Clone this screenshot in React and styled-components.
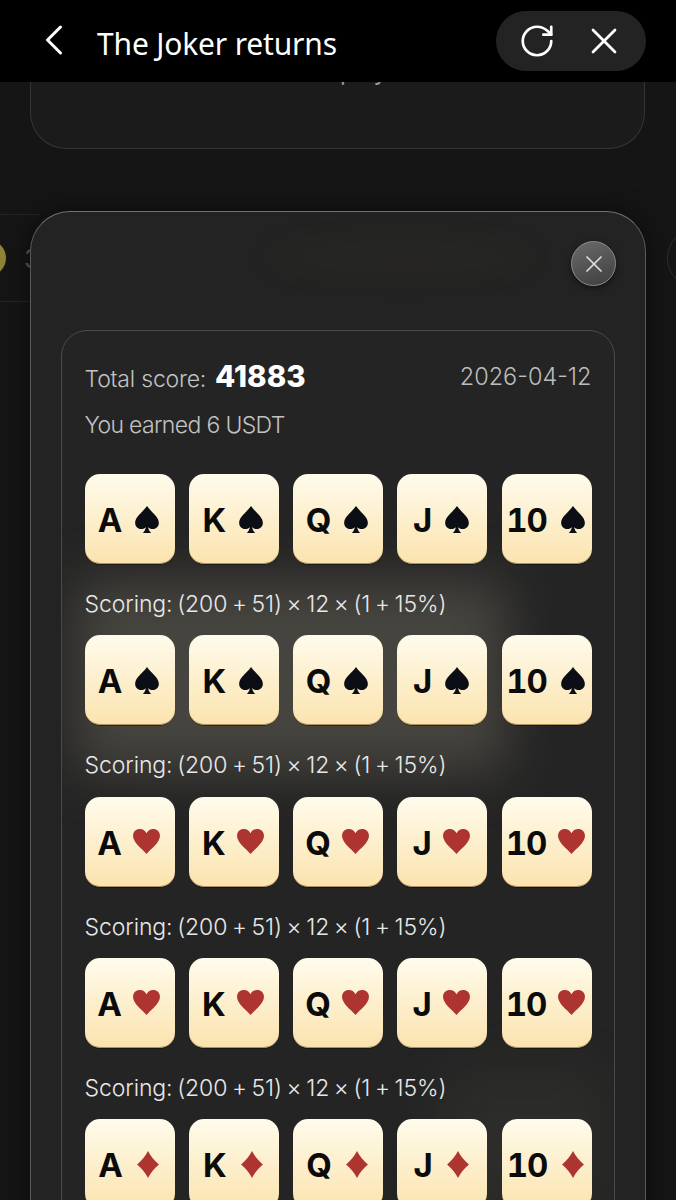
import React from "react"
import styled, { createGlobalStyle } from "styled-components"
import { ChevronLeft, RotateCw, X } from "lucide-react"

const GlobalStyle = createGlobalStyle`
  html, body {
    margin: 0;
    padding: 0;
    background: #141414;
  }
  * {
    box-sizing: border-box;
  }
`

const Page = styled.div`
  position: relative;
  width: 676px;
  height: 1200px;
  overflow: hidden;
  background: #151515;
  font-family: "Inter", "Liberation Sans", sans-serif;
`

const Header = styled.header`
  position: relative;
  z-index: 3;
  display: flex;
  align-items: center;
  height: 82px;
  padding: 0 30px 0 28px;
  background: #000;
  color: #fff;
`

const BackIcon = styled(ChevronLeft)`
  flex: none;
  width: 52px;
  height: 52px;
  margin-top: -3px;
`

const Title = styled.h1`
  flex: 1;
  margin: 4px 0 0 17px;
  font-family: "Noto Sans", sans-serif;
  font-size: 30px;
  font-weight: 400;
  letter-spacing: -0.17px;
  color: #fff;
`

const Pill = styled.div`
  display: flex;
  align-items: center;
  justify-content: center;
  gap: 26px;
  width: 150px;
  height: 60px;
  padding-left: 2px;
  border-radius: 30px;
  background: #232323;
  color: #fff;
`

const BackCard = styled.div`
  display: flow-root;
  height: 67px;
  margin: 0 31px 0 30px;
  border: 1px solid #363636;
  border-top: 0;
  border-radius: 0 0 36px 36px;
  background: #1b1b1b;
`

const BackCardText = styled.p`
  margin: -25px 0 0;
  padding-left: 52px;
  text-align: center;
  font-size: 24px;
  line-height: 30px;
  color: #9a9a9a;
`

const BackStrip = styled.div`
  display: flex;
  align-items: center;
  justify-content: space-between;
  height: 88px;
  margin-top: 65px;
`

const BackRow = styled.div`
  display: flex;
  align-items: center;
  gap: 18px;
  width: 40px;
  height: 100%;
  border-top: 1px solid #242424;
  border-bottom: 1px solid #242424;
`

const Coin = styled.span`
  flex: none;
  width: 36px;
  height: 36px;
  margin-left: -30px;
  border-radius: 50%;
  background: #8d8535;
`

const BackRank = styled.span`
  font-size: 26px;
  color: #5a5a5a;
`

const Ring = styled.span`
  flex: none;
  width: 60px;
  height: 60px;
  margin-right: -51px;
  border-radius: 50%;
  border: 1px solid #2e2e2e;
`

const Modal = styled.section`
  position: absolute;
  z-index: 2;
  top: 211px;
  left: 30px;
  width: 616px;
  height: 1100px;
  padding: 118px 30px 0;
  border: 1.5px solid #5a5a5a;
  border-top-color: #707070;
  border-radius: 40px;
  background: #232323;
  box-shadow: 0 0 24px rgba(0, 0, 0, 0.5);
`

const TopGlow = styled.div`
  position: absolute;
  top: 32px;
  left: 240px;
  width: 260px;
  height: 26px;
  border-radius: 50%;
  background: rgba(90, 75, 30, 0.1);
  filter: blur(14px);
`

const CloseButton = styled.button`
  position: absolute;
  top: 29px;
  right: 29px;
  display: flex;
  align-items: center;
  justify-content: center;
  width: 45px;
  height: 45px;
  padding: 0;
  border: 1px solid #8a8a8a;
  border-radius: 50%;
  background: linear-gradient(160deg, #6a6a6a, #3f3f3f);
  box-shadow: 0 2px 6px rgba(0, 0, 0, 0.5);
  color: #dedede;
`

const Panel = styled.div`
  position: relative;
  overflow: hidden;
  height: 1000px;
  padding: 27px 22.5px 0;
  border: 1.5px solid #4a4a4a;
  border-radius: 26px;
  background: #242424;
`

const Glow = styled.div`
  position: absolute;
  top: ${({ $top }) => $top}px;
  left: ${({ $left }) => $left}px;
  width: ${({ $width }) => $width}px;
  height: ${({ $height }) => $height}px;
  background: rgba(120, 115, 100, ${({ $alpha }) => $alpha});
  filter: blur(26px);
`

const PanelBody = styled.div`
  position: relative;
`

const SummaryRow = styled.div`
  display: flex;
  align-items: center;
  justify-content: space-between;
`

const ScoreLine = styled.span`
  display: flex;
  align-items: baseline;
`

const Label = styled.span`
  font-size: 23px;
  font-weight: 300;
  letter-spacing: -0.2px;
  color: #c2c2c2;
`

const Score = styled.strong`
  margin-left: 9px;
  font-size: 29.5px;
  font-weight: 800;
  color: #fff;
`

const DateText = styled.span`
  font-size: 23.5px;
  font-weight: 300;
  color: #bcbcbc;
`

const Earned = styled.p`
  margin: 17px 0 0;
  font-size: 23px;
  font-weight: 300;
  letter-spacing: -0.65px;
  color: #c2c2c2;
`

const Hands = styled.div`
  display: flex;
  flex-direction: column;
  margin-top: 35px;
`

const CardRow = styled.div`
  display: grid;
  grid-template-columns: repeat(5, 90px);
  justify-content: space-between;
`

const PlayingCard = styled.div`
  display: flex;
  align-items: center;
  justify-content: center;
  gap: ${({ $gap }) => $gap}px;
  height: 90px;
  padding-right: 2px;
  border-radius: 15px;
  background: linear-gradient(180deg, #fffbec 0%, #fbe3ae 100%);
  box-shadow: inset 0 -1px 0 rgba(110, 80, 30, 0.55), 0 1px 0 rgba(0, 0, 0, 0.4);
  font-size: 33px;
  font-weight: 700;
  font-variant-numeric: tabular-nums;
  letter-spacing: -1px;
  color: #0b0b0b;
`

const Rank = styled.span`
  margin-top: 3px;
  line-height: 1;
`

const Suit = styled.svg`
  flex: none;
  width: ${({ $w }) => $w}px;
  height: ${({ $h }) => $h}px;
  fill: ${({ $red }) => ($red ? "#ae3430" : "#0b0e14")};
`

const Scoring = styled.p`
  margin: 0;
  height: 71.3px;
  padding-top: 26px;
  font-size: 23px;
  font-weight: 300;
  letter-spacing: -0.1px;
  word-spacing: -1.7px;
  color: #e8e8e8;
`

const SUITS = {
  spade: {
    w: 24,
    h: 27,
    gap: 14,
    box: "3 1.5 18 20.5",
    d: "M12 1.500C9 6 3 9.500 3 14.200c0 3 2.300 4.800 4.700 4.800 1.500 0 2.700-.6 3.400-1.600-.2 2-.9 3.200-2.300 4.600h6.400c-1.400-1.400-2.100-2.600-2.300-4.600.7 1 1.900 1.600 3.400 1.600 2.400 0 4.700-1.800 4.700-4.800C21 9.500 15 6 12 1.500z",
  },
  heart: {
    w: 27,
    h: 25,
    gap: 12,
    box: "1.5 2.5 21 19.5",
    d: "M12 22C8 17.500 1.500 13 1.500 7.800 1.500 4.500 4 2.500 6.800 2.500 9 2.500 11 3.700 12 5.800 13 3.700 15 2.500 17.200 2.500 20 2.500 22.500 4.500 22.500 7.800 22.500 13 16 17.500 12 22z",
  },
  diamond: {
    w: 22,
    h: 27,
    gap: 15,
    box: "3.5 1.5 17 21",
    d: "M12 1.500C14 5.500 17 9 20.500 12 17 15 14 18.500 12 22.500 10 18.500 7 15 3.500 12 7 9 10 5.500 12 1.500z",
  },
}

const RANKS = ["A", "K", "Q", "J", "10"]

const HANDS = ["spade", "spade", "heart", "heart", "diamond"]

const Hand = ({ suit }) => {
  const shape = SUITS[suit]
  return (
    <CardRow>
      {RANKS.map((rank) => (
        <PlayingCard key={rank} $gap={shape.gap}>
          <Rank>{rank}</Rank>
          <Suit viewBox={shape.box} $w={shape.w} $h={shape.h} $red={suit !== "spade"}>
            <path d={shape.d} />
          </Suit>
        </PlayingCard>
      ))}
    </CardRow>
  )
}

const App = () => {
  return (
    <Page>
      <GlobalStyle />
      <Header>
        <BackIcon strokeWidth={1.4} />
        <Title>The Joker returns</Title>
        <Pill>
          <RotateCw size={38} strokeWidth={1.7} />
          <X size={44} strokeWidth={1.5} />
        </Pill>
      </Header>
      <BackCard>
        <BackCardText>play</BackCardText>
      </BackCard>
      <BackStrip>
        <BackRow>
          <Coin />
          <BackRank>3</BackRank>
        </BackRow>
        <Ring />
      </BackStrip>
      <Modal>
        <TopGlow />
        <CloseButton>
          <X size={28} strokeWidth={1.5} />
        </CloseButton>
        <Panel>
          <Glow $top={250} $left={14} $width={430} $height={190} $alpha={0.42} />
          <Glow $top={740} $left={380} $width={160} $height={140} $alpha={0.1} />
          <PanelBody>
            <SummaryRow>
              <ScoreLine>
                <Label>Total score:</Label>
                <Score>41883</Score>
              </ScoreLine>
              <DateText>2026-04-12</DateText>
            </SummaryRow>
            <Earned>You earned 6 USDT</Earned>
            <Hands>
              {HANDS.map((suit, i) => (
                <React.Fragment key={i}>
                  <Hand suit={suit} />
                  {i < HANDS.length - 1 && <Scoring>Scoring: (200 + 51) × 12 × (1 + 15%)</Scoring>}
                </React.Fragment>
              ))}
            </Hands>
          </PanelBody>
        </Panel>
      </Modal>
    </Page>
  )
}

export default App
